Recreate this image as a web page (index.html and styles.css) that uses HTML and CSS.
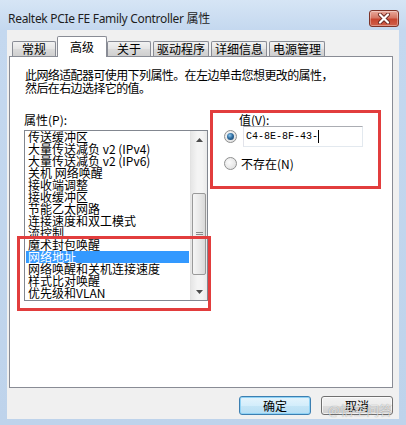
FILE: index.html
```html
<!DOCTYPE html>
<html lang="zh-cn">
<head>
    <meta charset="UTF-8">
    <title>Realtek PCIe FE Family Controller 属性</title>
    <link rel="stylesheet" href="styles.css">
</head>
<body>
    <div class="window">
        <div class="titlebar">
            <span class="title">Realtek PCIe FE Family Controller 属性</span>
            <span class="close">
                <svg width="14" height="11" viewBox="0 0 14 11">
                    <path d="M3 1.5 L11 9.5 M11 1.5 L3 9.5" stroke="#6b2b24" stroke-width="4" stroke-linecap="round"/>
                    <path d="M3 1.5 L11 9.5 M11 1.5 L3 9.5" stroke="#fff" stroke-width="2.2" stroke-linecap="round"/>
                </svg>
            </span>
        </div>

        <div class="client">
            <div class="tabs">
                <span class="tab">常规</span>
                <span class="tab active">高级</span>
                <span class="tab">关于</span>
                <span class="tab wide">驱动程序</span>
                <span class="tab wide">详细信息</span>
                <span class="tab wide">电源管理</span>
            </div>

            <div class="panel">
                <p class="desc">此网络适配器可使用下列属性。在左边单击您想更改的属性，<br>然后在右边选择它的值。</p>

                <div class="fields">
                    <div class="props">
                        <div class="label">属性(P):</div>
                        <div class="listbox">
                            <ul class="items">
                                <li>传送缓冲区</li>
                                <li>大量传送减负 v2 (IPv4)</li>
                                <li>大量传送减负 v2 (IPv6)</li>
                                <li>关机 网络唤醒</li>
                                <li>接收端调整</li>
                                <li>接收缓冲区</li>
                                <li>节能乙太网路</li>
                                <li>连接速度和双工模式</li>
                                <li>流控制</li>
                                <li>魔术封包唤醒</li>
                                <li class="selected">网络地址</li>
                                <li>网络唤醒和关机连接速度</li>
                                <li>样式比对唤醒</li>
                                <li>优先级和VLAN</li>
                            </ul>
                            <div class="scrollbar">
                                <div class="arrow">
                                    <svg width="7" height="4" viewBox="0 0 7 4"><path d="M0 4 L3.5 0 L7 4 Z" fill="#4d4d4d"/></svg>
                                </div>
                                <div class="thumb"><span class="grip"></span></div>
                                <div class="arrow down">
                                    <svg width="7" height="4" viewBox="0 0 7 4"><path d="M0 0 L3.5 4 L7 0 Z" fill="#4d4d4d"/></svg>
                                </div>
                            </div>
                        </div>
                    </div>

                    <div class="value">
                        <div class="label">值(V):</div>
                        <div class="row">
                            <span class="radio checked"></span>
                            <div class="input">C4-8E-8F-43-<i class="caret"></i></div>
                        </div>
                        <div class="row">
                            <span class="radio"></span>
                            <span>不存在(N)</span>
                        </div>
                    </div>
                </div>

                <div class="mark mark-list"></div>
                <div class="mark mark-value"></div>
            </div>

            <div class="buttons">
                <button class="btn default">确定</button>
                <button class="btn">取消</button>
            </div>
        </div>

        <div class="watermark">@悟空问答</div>
    </div>
</body>
</html>
```

FILE: styles.css
```css
* {
    box-sizing: border-box;
    margin: 0;
    padding: 0;
}

body {
    width: 406px;
    height: 425px;
    overflow: hidden;
    font-family: "Noto Sans CJK SC", sans-serif;
    font-size: 12px;
    color: #000;
}

.window {
    position: relative;
    width: 406px;
    height: 425px;
    display: flex;
    flex-direction: column;
    padding: 0 7px 6px 7px;
    background: linear-gradient(180deg, #d6e5f5 0, #c4d8ef 30px, #bed3eb 100%);
}

/* barra de titulo */
.titlebar {
    height: 30px;
    display: flex;
    justify-content: space-between;
    align-items: flex-start;
    padding: 10px 0 0 1px;
}

.title {
    font-family: "Noto Sans", "Noto Sans CJK SC", sans-serif;
    font-size: 12px;
    line-height: 17px;
    letter-spacing: -0.3px;
    color: #1e1e1e;
}

.close {
    width: 30px;
    height: 17px;
    display: flex;
    align-items: center;
    justify-content: center;
    border: 1px solid #7d3328;
    border-radius: 3px;
    background: linear-gradient(180deg, #e9a99b 0, #d67765 45%, #c7452f 55%, #d0604a 100%);
    box-shadow: inset 0 0 0 1px rgba(255, 255, 255, 0.35);
}

/* area cliente */
.client {
    flex: 1;
    display: flex;
    flex-direction: column;
    padding: 6px 6px 0 2px;
    background-color: #f0f0f0;
}

.tabs {
    position: relative;
    z-index: 1;
    height: 21px;
    display: flex;
    align-items: flex-start;
    gap: 2px;
    padding-left: 3px;
    margin-bottom: -1px;
}

.tab {
    height: 15px;
    margin-top: 5px;
    padding: 0 9px;
    line-height: 14px;
    border: 1px solid #898c95;
    border-bottom: none;
    border-radius: 2px 2px 0 0;
    background: linear-gradient(180deg, #f2f2f2, #e4e4e4 50%, #dbdbdb 50%, #cfcfcf);
}

.tab.wide {
    padding: 0 3px;
}

.tab.active {
    height: 21px;
    margin: 0 -2px 0 -1px;
    padding: 0 12px;
    line-height: 19px;
    background: #fff;
}

.panel {
    position: relative;
    width: 384px;
    height: 332px;
    padding: 11px 0 0 15px;
    border: 1px solid #898c95;
    background-color: #fff;
}

.desc {
    line-height: 13px;
    letter-spacing: -0.6px;
}

.fields {
    display: flex;
    margin-top: 19px;
}

.label {
    line-height: 13px;
}

.props {
    width: 184px;
    margin-left: -1px;
}

.listbox {
    display: flex;
    height: 171px;
    margin-top: 4px;
    border: 1px solid #828790;
}

.items {
    flex: 1;
    list-style: none;
}

.items li {
    height: 12px;
    margin: 0 1px;
    padding-left: 2px;
    line-height: 12px;
    white-space: nowrap;
}

.items li.selected {
    background-color: #3399ff;
    color: #fff;
}

.scrollbar {
    width: 17px;
    display: flex;
    flex-direction: column;
    align-items: center;
    border-left: 1px solid #e2e2e2;
    background: linear-gradient(90deg, #e6e6e6, #f4f4f4 40%, #f4f4f4 70%, #e9e9e9);
}

.arrow {
    height: 17px;
    display: flex;
    align-items: center;
    justify-content: center;
}

.arrow.down {
    margin-top: auto;
}

.thumb {
    width: 14px;
    height: 82px;
    margin-top: 45px;
    display: flex;
    align-items: center;
    justify-content: center;
    border: 1px solid #999;
    border-radius: 2px;
    background: linear-gradient(90deg, #f5f5f5, #e9e9e9 50%, #d9d9d9);
}

.grip {
    width: 7px;
    height: 5px;
    border-top: 1px solid #8a8a8a;
    border-bottom: 1px solid #8a8a8a;
    background: linear-gradient(180deg, transparent 1px, #8a8a8a 1px, #8a8a8a 2px, transparent 2px);
}

.value {
    margin-left: 16px;
}

.value .label {
    margin-left: 15px;
}

.row {
    display: flex;
    align-items: center;
    gap: 4px;
    line-height: 13px;
}

.row:first-of-type {
    margin-top: 4px;
}

.row + .row {
    margin-top: 10px;
}

.radio {
    position: relative;
    width: 13px;
    height: 13px;
    border: 1px solid #8e8f8f;
    border-radius: 50%;
    background: radial-gradient(circle at 40% 40%, #fbfbfb, #dadada);
}

.radio.checked::after {
    position: absolute;
    content: "";
    top: 2px;
    left: 2px;
    width: 7px;
    height: 7px;
    border-radius: 50%;
    background: radial-gradient(circle at 40% 35%, #8fc7ee 0, #2f6da0 45%, #163a5e 100%);
}

.input {
    width: 120px;
    height: 21px;
    margin-left: 2px;
    display: flex;
    align-items: center;
    padding-left: 2px;
    font-family: "Liberation Mono", monospace;
    font-size: 10px;
    border: 1px solid;
    border-color: #abadb3 #e3e9ef #e3e9ef #e2e3ea;
}

.caret {
    width: 1px;
    height: 13px;
    background-color: #000;
}

/* marcacoes vermelhas */
.mark {
    position: absolute;
    border: 3px solid #e23d3d;
}

.mark-list {
    left: 7px;
    top: 179px;
    width: 194px;
    height: 75px;
}

.mark-value {
    left: 200px;
    top: 53px;
    width: 171px;
    height: 79px;
}

.buttons {
    display: flex;
    justify-content: flex-end;
    gap: 10px;
    margin-top: 8px;
}

.btn {
    width: 72px;
    height: 19px;
    font-family: "Noto Sans CJK SC", sans-serif;
    font-size: 12px;
    line-height: 17px;
    color: #000;
    border: 1px solid #707070;
    border-radius: 3px;
    background: linear-gradient(180deg, #f2f2f2, #ebebeb 50%, #dddddd 50%, #cfcfcf);
    box-shadow: inset 0 0 0 1px rgba(255, 255, 255, 0.7);
}

.btn.default {
    border-color: #3c7fb1;
    background: linear-gradient(180deg, #e5f4fc, #d3edfb 50%, #c4e5f6 50%, #b7def4);
    box-shadow: inset 0 0 0 1px #8fd2f5;
}

.watermark {
    position: absolute;
    left: 328px;
    top: 402px;
    font-size: 13px;
    line-height: 16px;
    color: rgba(255, 255, 255, 0.75);
    text-shadow: 0 0 1px rgba(0, 0, 0, 0.45);
}
```
